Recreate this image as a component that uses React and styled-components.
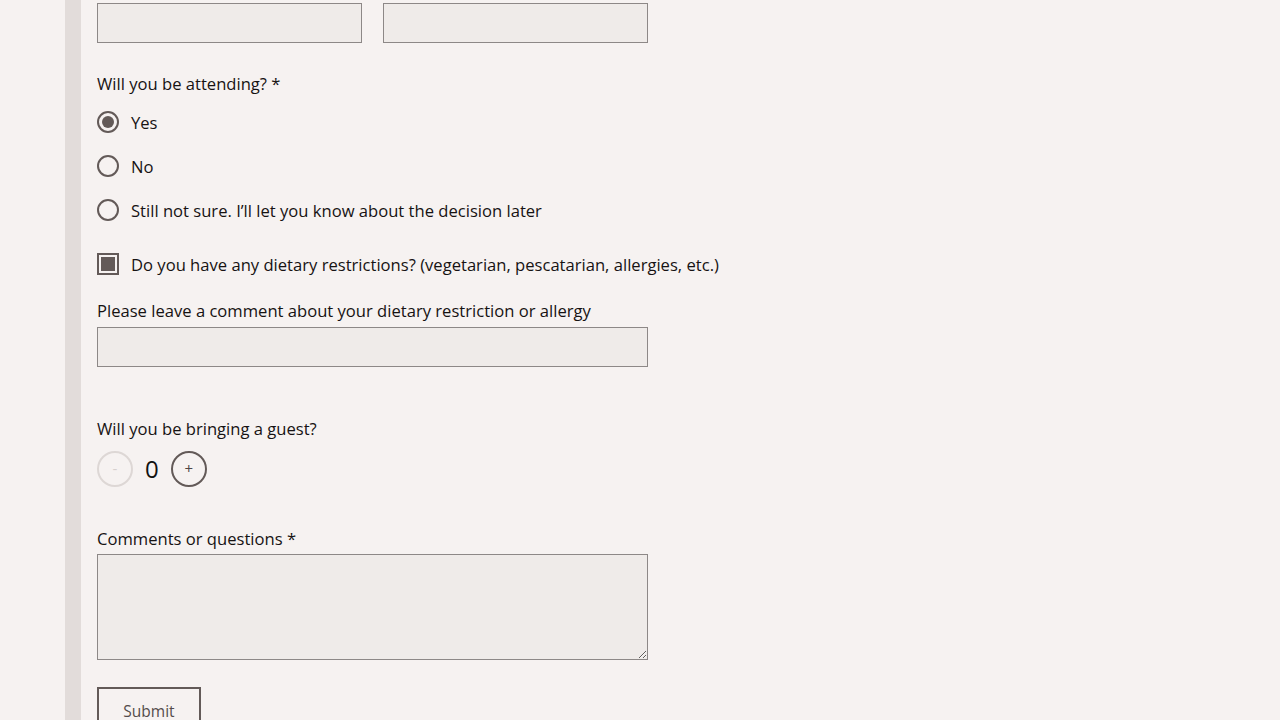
import React, { useState } from "react";
import styled, { createGlobalStyle } from "styled-components";

const Global = createGlobalStyle`
  html, body { margin: 0; padding: 0; background: #f6f2f1; }
  body { font-family: "Open Sans", "Noto Sans", sans-serif; color: #161313; }
  * { box-sizing: border-box; }
`;

const Page = styled.div`
  display: flex;
  height: 720px;
  background: #f6f2f1;
  overflow: hidden;
`;

const Gutter = styled.div`
  width: 65px;
  flex-shrink: 0;
`;

const Rail = styled.div`
  width: 16px;
  flex-shrink: 0;
  background: #e2dcda;
`;

const Form = styled.form`
  display: flex;
  flex-direction: column;
  padding: 3px 0 0 16px;
  width: 720px;
  & > * { flex-shrink: 0; }
`;

const Row = styled.div`
  display: flex;
  gap: 21px;
`;

const TextInput = styled.input`
  width: ${(p) => p.$w || 265}px;
  height: 40px;
  margin-top: ${(p) => p.$mt || 0}px;
  background: #efebe9;
  border: 1.5px solid #8d8887;
  border-radius: 0;
  outline: none;
  font: inherit;
  padding: 0 10px;
`;

const Label = styled.div`
  font-size: 16.6px;
  line-height: 24px;
  margin-top: ${(p) => p.$mt || 0}px;
`;

const Options = styled.div`
  display: flex;
  flex-direction: column;
  gap: 20px;
  margin-top: ${(p) => p.$mt || 0}px;
`;

const Option = styled.label`
  display: flex;
  align-items: center;
  gap: 12px;
  height: 24px;
  font-size: 16.6px;
  cursor: pointer;
  white-space: nowrap;
  margin-top: ${(p) => p.$mt || 0}px;
`;

const Radio = styled.span`
  width: 22px;
  height: 22px;
  border-radius: 50%;
  border: 2px solid #635a58;
  display: flex;
  align-items: center;
  justify-content: center;
  flex-shrink: 0;
  &::after {
    content: "";
    width: 12px;
    height: 12px;
    border-radius: 50%;
    background: ${(p) => (p.$on ? "#635a58" : "transparent")};
  }
`;

const Check = styled.span`
  width: 22px;
  height: 22px;
  border: 2px solid #635a58;
  display: flex;
  align-items: center;
  justify-content: center;
  flex-shrink: 0;
  &::after {
    content: "";
    width: 14px;
    height: 14px;
    background: ${(p) => (p.$on ? "#635a58" : "transparent")};
  }
`;

const Stepper = styled.div`
  display: flex;
  align-items: center;
  gap: 12px;
  margin-top: 10px;
  height: 36px;
`;

const StepButton = styled.button`
  width: 36px;
  height: 36px;
  border-radius: 50%;
  background: transparent;
  border: 2px solid ${(p) => (p.disabled ? "#ddd7d5" : "#635a58")};
  color: ${(p) => (p.disabled ? "#d6d0ce" : "#4e4645")};
  font: inherit;
  font-size: 15px;
  line-height: 1;
  padding: 0 0 2px;
  display: flex;
  align-items: center;
  justify-content: center;
`;

const Count = styled.span`
  font-size: 24px;
  line-height: 1;
  color: #111;
`;

const Area = styled.textarea`
  width: 551px;
  height: 106px;
  margin-top: 3px;
  background: #efebe9;
  border: 1.5px solid #8d8887;
  border-radius: 0;
  outline: none;
  font: inherit;
  padding: 8px 10px;
  display: block;
`;

const Submit = styled.button`
  width: 104px;
  height: 48px;
  margin-top: 27px;
  background: transparent;
  border: 2px solid #635a58;
  color: #544c4b;
  font: inherit;
  font-size: 15.5px;
  line-height: 20px;
  padding: 0;
  align-self: flex-start;
`;

export default function App() {
  const [att, setAtt] = useState("yes");
  const [diet, setDiet] = useState(true);
  const [guests, setGuests] = useState(0);
  const opts = [
    ["yes", "Yes"],
    ["no", "No"],
    ["maybe", "Still not sure. I’ll let you know about the decision later"],
  ];
  return (
    <>
      <Global />
      <Page>
        <Gutter />
        <Rail />
        <Form onSubmit={(e) => e.preventDefault()}>
          <Row>
            <TextInput />
            <TextInput />
          </Row>
          <Label $mt={29}>Will you be attending? *</Label>
          <Options $mt={14}>
            {opts.map(([k, t]) => (
              <Option key={k} onClick={() => setAtt(k)}>
                <Radio $on={att === k} />
                {t}
              </Option>
            ))}
          </Options>
          <Option $mt={30} onClick={() => setDiet(!diet)}>
            <Check $on={diet} />
            Do you have any dietary restrictions? (vegetarian, pescatarian, allergies, etc.)
          </Option>
          <Label $mt={23}>Please leave a comment about your dietary restriction or allergy</Label>
          <TextInput $w={551} $mt={4} />
          <Label $mt={50}>Will you be bringing a guest?</Label>
          <Stepper>
            <StepButton type="button" disabled={guests === 0} onClick={() => setGuests(Math.max(0, guests - 1))}>
              -
            </StepButton>
            <Count>{guests}</Count>
            <StepButton type="button" onClick={() => setGuests(guests + 1)}>
              +
            </StepButton>
          </Stepper>
          <Label $mt={40}>Comments or questions *</Label>
          <Area />
          <Submit type="submit">Submit</Submit>
        </Form>
      </Page>
    </>
  );
}
